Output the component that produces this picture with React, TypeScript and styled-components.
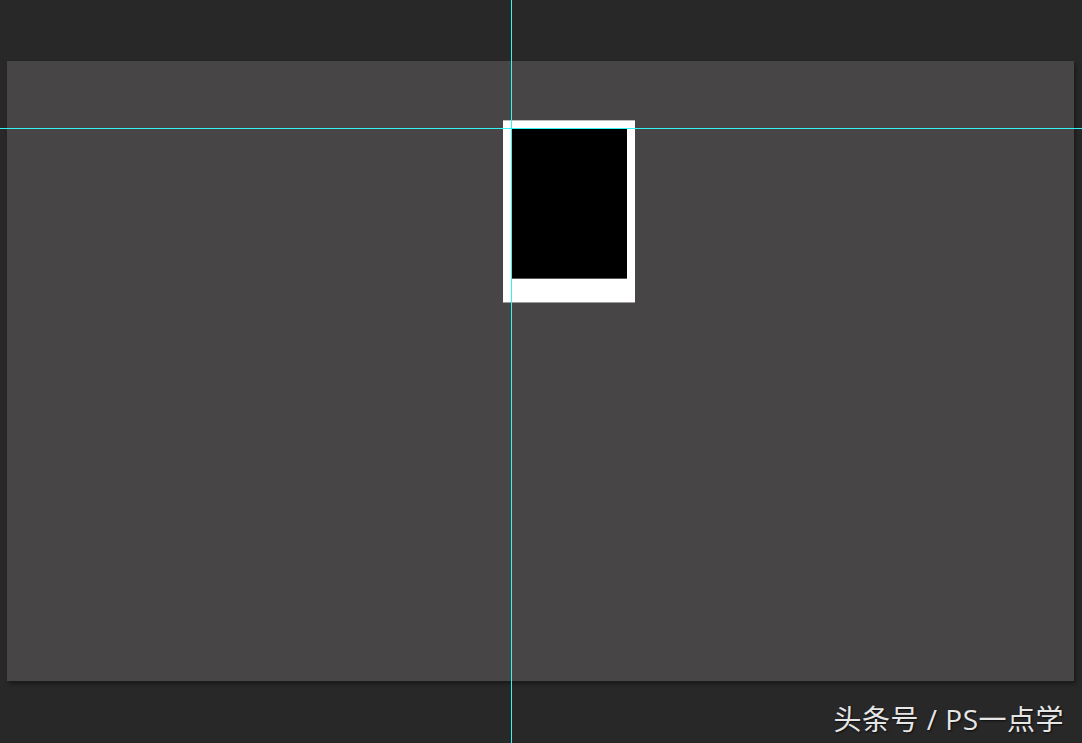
import styled, { createGlobalStyle } from "styled-components";

const Global = createGlobalStyle`
  html, body {
    margin: 0;
    padding: 0;
    background: #282828;
    overflow: hidden;
  }
`;

const Screen = styled.div`
  position: relative;
  width: 1082px;
  height: 743px;
  box-sizing: border-box;
  padding: 61px 8px 0 7px;
  background: #282828;
`;

const Canvas = styled.div`
  width: 1067px;
  height: 620px;
  background: #474546;
  box-shadow: 2px 3px 4px rgba(0, 0, 0, 0.35);
  padding: 59px 0 0 496px;
  box-sizing: border-box;
`;

const Polaroid = styled.div`
  width: 132px;
  height: 183px;
  box-sizing: border-box;
  background: #ffffff;
  padding: 8px 8px 0 9px;
  border-top: 1px solid #bdbdbd;
  border-bottom: 1px solid #9a9a9a;
`;

const Photo = styled.div`
  width: 115px;
  height: 150px;
  background: #000000;
  margin-top: -1px;
  border-bottom: 1px solid #5a5a5a;
`;

const Guide = styled.div<{ $vertical?: boolean; $at: number }>`
  position: absolute;
  background: #33f3f3;
  ${(p) =>
    p.$vertical
      ? `left: ${p.$at}px; top: 0; bottom: 0; width: 1px;`
      : `top: ${p.$at}px; left: 0; right: 0; height: 1px;`}
`;

const Watermark = styled.div`
  position: absolute;
  right: 18px;
  bottom: 7px;
  color: #e6e6e6;
  font-family: "Open Sans", "Noto Sans CJK SC", sans-serif;
  font-size: 28px;
  letter-spacing: 0.5px;
  line-height: 34px;
  text-shadow: 1px 1px 2px rgba(0, 0, 0, 0.7);
  white-space: nowrap;
`;

export default function App() {
  return (
    <>
      <Global />
      <Screen>
        <Canvas>
          <Polaroid>
            <Photo />
          </Polaroid>
        </Canvas>
        <Guide $at={128} />
        <Guide $vertical $at={511} />
        <Watermark>头条号 / PS一点学</Watermark>
      </Screen>
    </>
  );
}
